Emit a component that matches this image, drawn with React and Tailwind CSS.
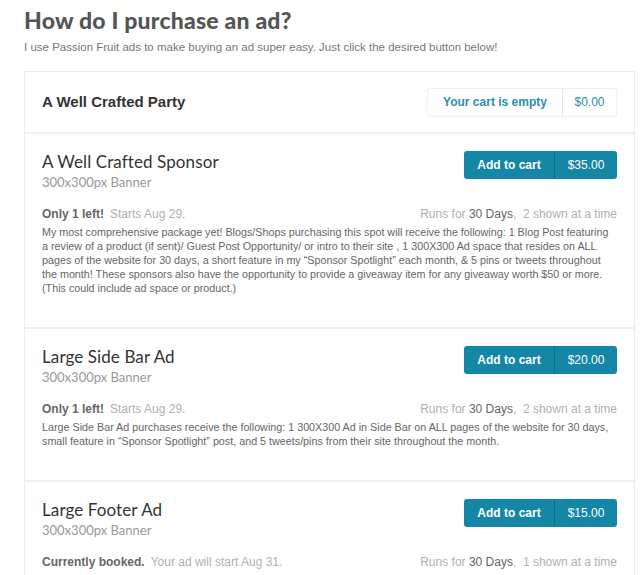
import React from 'react';

const ads = [
    {
        title: 'A Well Crafted Sponsor',
        size: '300x300px Banner',
        price: '$35.00',
        status: 'Only 1 left!',
        note: 'Starts Aug 29.',
        shown: '2 shown at a time',
        body: 'My most comprehensive package yet! Blogs/Shops purchasing this spot will receive the following: 1 Blog Post featuring a review of a product (if sent)/ Guest Post Opportunity/ or intro to their site , 1 300X300 Ad space that resides on ALL pages of the website for 30 days, a short feature in my \u201cSponsor Spotlight\u201d each month, & 5 pins or tweets throughout the month! These sponsors also have the opportunity to provide a giveaway item for any giveaway worth $50 or more. (This could include ad space or product.)'
    },
    {
        title: 'Large Side Bar Ad',
        size: '300x300px Banner',
        price: '$20.00',
        status: 'Only 1 left!',
        note: 'Starts Aug 29.',
        shown: '2 shown at a time',
        body: 'Large Side Bar Ad purchases receive the following: 1 300X300 Ad in Side Bar on ALL pages of the website for 30 days, small feature in \u201cSponsor Spotlight\u201d post, and 5 tweets/pins from their site throughout the month.'
    },
    {
        title: 'Large Footer Ad',
        size: '300x300px Banner',
        price: '$15.00',
        status: 'Currently booked.',
        note: 'Your ad will start Aug 31.',
        shown: '1 shown at a time',
        body: 'The purchase of Large Footer Ad Space in the Footer Section of A Well Crafted Party receives a 300X300 Ad Slot for the footer on ALL pages of the website for 30 days.'
    }
];

function AdRow({ ad }) {
    return (
        <div className="border-t-2 border-[#efefef] px-[17px] pt-[17px] pb-[32px]">
            <div className="flex items-start justify-between">
                <div>
                    <h3 className="font-['Lato'] text-[17px] leading-[21px] text-[#333] tracking-[0.1px]">{ad.title}</h3>
                    <p className="font-['Lato'] text-[13px] leading-[18px] mt-[1px] text-[#999]">{ad.size}</p>
                </div>
                <button className="flex h-[28px] rounded-[3px] bg-[#1486a6] text-white text-[12px] font-['Liberation_Sans',sans-serif]">
                    <span className="w-[91px] flex items-center justify-center font-bold border-r border-[#0f6f8a]">Add to cart</span>
                    <span className="w-[62px] flex items-center justify-center">{ad.price}</span>
                </button>
            </div>
            <div className="mt-[16px] flex justify-between text-[12px] leading-[14px] font-['Liberation_Sans',sans-serif]">
                <p>
                    <span className="font-bold text-[#666]">{ad.status}</span>
                    <span className="ml-[6px] text-[#b0b0b0]">{ad.note}</span>
                </p>
                <p className="text-[#b0b0b0]">
                    Runs for <span className="text-[#666]">30 Days</span>,&nbsp; {ad.shown}
                </p>
            </div>
            <p className="mt-[4px] text-[10.75px] leading-[14px] text-[#666] font-['Liberation_Sans',sans-serif]">{ad.body}</p>
        </div>
    );
}

export default function App() {
    return (
        <div className="bg-white pl-[24px] pr-[5px] pt-[6px] overflow-hidden h-[575px]">
            <h1 className="font-['Lato'] font-black text-[23px] leading-[28px] text-[#555] tracking-[0.2px]">How do I purchase an ad?</h1>
            <p className="mt-[6px] text-[11.5px] leading-[14px] text-[#777] font-['Liberation_Sans',sans-serif]">
                I use Passion Fruit ads to make buying an ad super easy. Just click the desired button below!
            </p>
            <div className="mt-[17px] border border-[#ececec]">
                <div className="h-[60px] flex items-center justify-between px-[17px]">
                    <h2 className="font-['Liberation_Sans',sans-serif] font-bold text-[15px] text-[#333]">A Well Crafted Party</h2>
                    <div className="flex h-[29px] border border-[#efefef] rounded-[3px] text-[12px] text-[#2a8fb0] font-['Liberation_Sans',sans-serif]">
                        <span className="w-[135px] flex items-center justify-center font-bold border-r border-[#e6e6e6]">Your cart is empty</span>
                        <span className="w-[53px] flex items-center justify-center">$0.00</span>
                    </div>
                </div>
                {ads.map(ad => (
                    <AdRow key={ad.title} ad={ad} />
                ))}
            </div>
        </div>
    );
}
